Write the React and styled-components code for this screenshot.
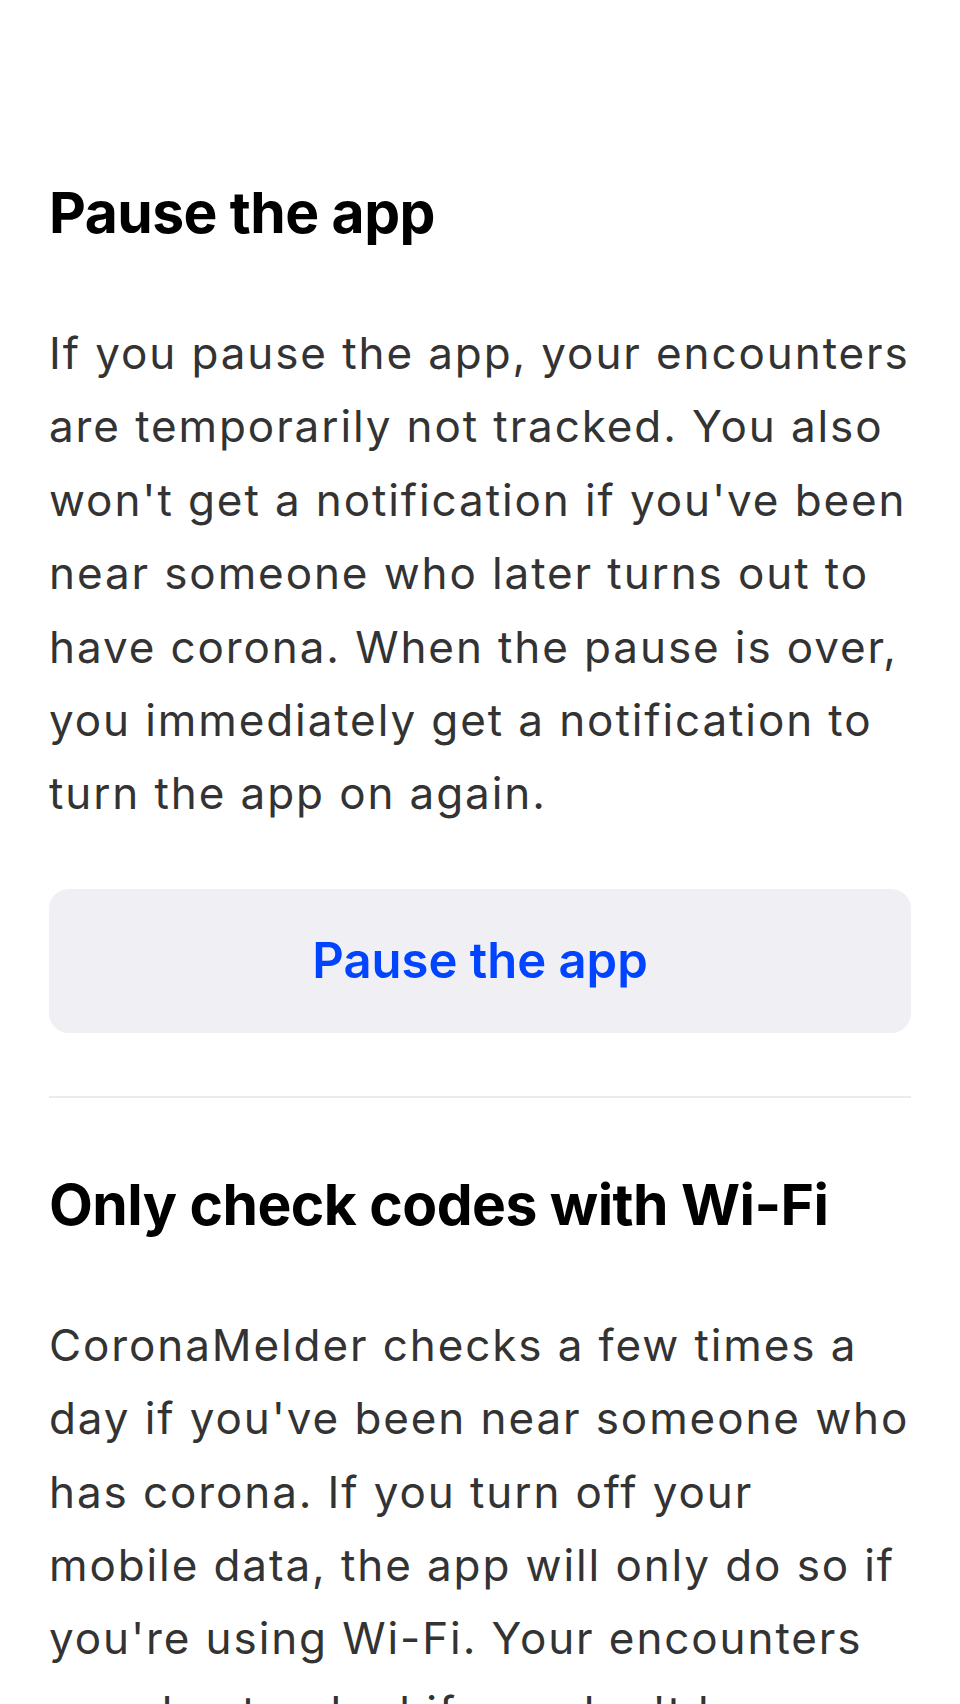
import React from "react";
import styled, { createGlobalStyle } from "styled-components";

const GlobalStyle = createGlobalStyle`
  html, body {
    margin: 0;
    padding: 0;
    background: #ffffff;
  }
  body {
    font-family: Inter, "Noto Sans", sans-serif;
    -webkit-font-smoothing: antialiased;
  }
`;

const Page = styled.div`
  padding: 178px 49px 0;
  height: 1704px;
  box-sizing: border-box;
  overflow: hidden;
`;

const Section = styled.section`
  display: flex;
  flex-direction: column;
  margin-top: ${p => p.$top || 0}px;
`;

const Title = styled.h2`
  margin: 0;
  font-size: 57px;
  line-height: 69px;
  font-weight: 700;
  color: #000000;
  letter-spacing: -0.55px;
`;

const Body = styled.p`
  margin: 70px 0 0;
  font-size: 44px;
  line-height: 73.4px;
  font-weight: 400;
  color: #333333;
  letter-spacing: 1.9px;
`;

const ActionButton = styled.button`
  margin-top: 58px;
  height: 144px;
  width: 100%;
  border: none;
  border-radius: 20px;
  background: #efeff4;
  color: #0044ff;
  font-family: inherit;
  font-size: 49px;
  font-weight: 600;
  cursor: pointer;
`;

const Divider = styled.hr`
  margin: 63px 0 0;
  border: none;
  height: 2px;
  background: #ebebeb;
`;

const settings = [
  {
    title: "Pause the app",
    text: "If you pause the app, your encounters are temporarily not tracked. You also won't get a notification if you've been near someone who later turns out to have corona. When the pause is over, you immediately get a notification to turn the app on again.",
    action: "Pause the app",
  },
  {
    title: "Only check codes with Wi-Fi",
    text: "CoronaMelder checks a few times a day if you've been near someone who has corona. If you turn off your mobile data, the app will only do so if you're using Wi-Fi. Your encounters are also tracked if you don't have an internet connection.",
  },
];

export default function App() {
  return (
    <>
      <GlobalStyle />
      <Page>
        {settings.map((s, i) => (
          <React.Fragment key={s.title}>
            <Section $top={i > 0 ? 72 : 0}>
              <Title>{s.title}</Title>
              <Body>{s.text}</Body>
              {s.action && <ActionButton>{s.action}</ActionButton>}
            </Section>
            {s.action && <Divider />}
          </React.Fragment>
        ))}
      </Page>
    </>
  );
}
